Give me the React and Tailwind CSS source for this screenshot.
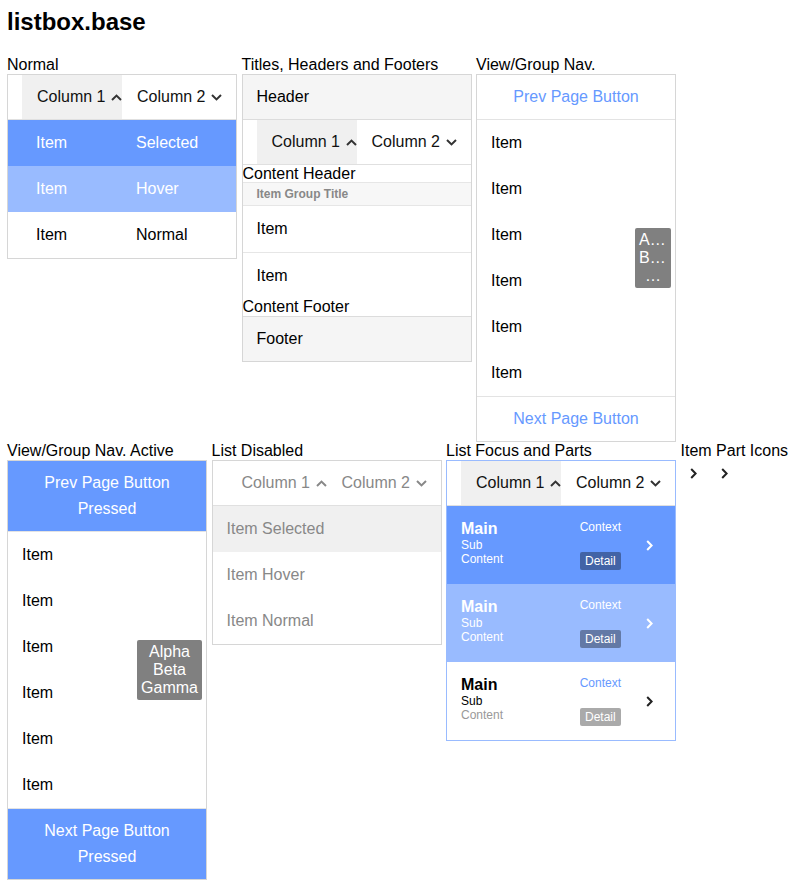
import React from "react";

const CaretUp = ({ className }) => (
  <svg width="11" height="7" viewBox="0 0 11 7" fill="none" className={className}>
    <path d="M1 6L5.5 1.6L10 6" stroke="currentColor" strokeWidth="2" />
  </svg>
);

const CaretDown = ({ className }) => (
  <svg width="11" height="7" viewBox="0 0 11 7" fill="none" className={className}>
    <path d="M1 1L5.5 5.4L10 1" stroke="currentColor" strokeWidth="2" />
  </svg>
);

const ChevronRight = ({ className }) => (
  <svg width="7" height="11" viewBox="0 0 7 11" fill="none" className={className}>
    <path d="M1.2 1L5.6 5.5L1.2 10" stroke="currentColor" strokeWidth="2" />
  </svg>
);

// column header row shared by several panels
const ColumnHeader = ({ sorted = true, disabled = false }) => {
  const text = disabled ? "text-[#888]" : "text-[#111]";
  const icon = disabled ? "text-[#888]" : "text-[#333]";
  return (
    <div className="h-[45px] flex pl-[14px] border-b border-[#e0e0e0]">
      <div
        className={`w-[100px] flex items-center justify-between pl-[15px] pr-0 ${
          sorted ? "bg-[#f0f0f0]" : ""
        }`}
      >
        <span className={text}>Column 1</span>
        <CaretUp className={icon} />
      </div>
      <div className="w-[100px] flex items-center justify-between pl-[15px] pr-0">
        <span className={text}>Column 2</span>
        <CaretDown className={icon} />
      </div>
    </div>
  );
};

const Label = ({ children }) => <div className="leading-[18px]">{children}</div>;

const normalRows = [
  { a: "Item", b: "Selected", cls: "bg-[#6699ff] text-white" },
  { a: "Item", b: "Hover", cls: "bg-[#99bbff] text-white" },
  { a: "Item", b: "Normal", cls: "bg-white text-black" },
];

const focusRows = [
  {
    bg: "bg-[#6699ff]",
    main: "text-white",
    sub: "text-white",
    content: "text-white",
    context: "text-white",
    badge: "bg-black/35",
    chev: "text-white",
  },
  {
    bg: "bg-[#99bbff]",
    main: "text-white",
    sub: "text-white",
    content: "text-white",
    context: "text-white",
    badge: "bg-black/35",
    chev: "text-white",
  },
  {
    bg: "bg-white",
    main: "text-black",
    sub: "text-black",
    content: "text-[#999]",
    context: "text-[#6699ff]",
    badge: "bg-[#aaa]",
    chev: "text-[#222]",
  },
];

const navItems = ["Item", "Item", "Item", "Item", "Item", "Item"];

const App = () => {
  return (
    <div className="min-h-[889px] bg-white pt-2 pl-[7px] text-base text-black font-['Liberation_Sans',Arial,sans-serif]">
      <h1 className="text-2xl font-bold leading-[28px] mb-[20px]">listbox.base</h1>

      {/* Row 1 */}
      <div className="flex items-start gap-x-[4.5px]">
        {/* Normal */}
        <div>
          <Label>Normal</Label>
          <div className="w-[230px] border border-[#d6d6d6]">
            <ColumnHeader />
            {normalRows.map((row, i) => (
              <div key={i} className={`h-[46px] flex items-center pl-[14px] ${row.cls}`}>
                <div className="w-[100px] pl-[14px]">{row.a}</div>
                <div className="w-[100px] pl-[14px]">{row.b}</div>
              </div>
            ))}
          </div>
        </div>

        {/* Titles, Headers and Footers */}
        <div>
          <Label>Titles, Headers and Footers</Label>
          <div className="w-[230px] border border-[#d6d6d6]">
            <div className="h-[45px] flex items-center px-[14px] bg-[#f5f5f5] border-b border-[#dcdcdc]">
              Header
            </div>
            <ColumnHeader />
            <div className="leading-[17px]">Content Header</div>
            <div className="px-[14px] py-1 text-xs font-bold leading-[14px] text-[#888] bg-[#f7f7f7] border-y border-[#e6e6e6]">
              Item Group Title
            </div>
            <div className="h-[46px] flex items-center px-[14px]">Item</div>
            <div className="h-[46px] flex items-center px-[14px] border-t border-[#e6e6e6]">Item</div>
            <div className="leading-[18px]">Content Footer</div>
            <div className="h-[45px] flex items-center px-[14px] bg-[#f5f5f5] border-t border-[#dcdcdc]">
              Footer
            </div>
          </div>
        </div>

        {/* View/Group Nav. */}
        <div>
          <Label>View/Group Nav.</Label>
          <div className="w-[200px] border border-[#d6d6d6]">
            <div className="h-[45px] flex items-center justify-center text-[#6699ff] border-b border-[#e3e3e3]">
              Prev Page Button
            </div>
            <div className="relative">
              {navItems.map((item, i) => (
                <div key={i} className="h-[46px] flex items-center px-[14px]">
                  {item}
                </div>
              ))}
              <div className="absolute right-[4px] top-1/2 -translate-y-1/2 w-[36px] px-1 py-[3px] rounded-[2px] bg-[#808080] text-white text-center leading-[18px]">
                <div className="text-left">A…</div>
                <div className="text-left">B…</div>
                <div>…</div>
              </div>
            </div>
            <div className="h-[45px] flex items-center justify-center text-[#6699ff] border-t border-[#e3e3e3]">
              Next Page Button
            </div>
          </div>
        </div>
      </div>

      {/* Row 2 */}
      <div className="flex items-start gap-x-[4.5px]">
        {/* View/Group Nav. Active */}
        <div>
          <Label>View/Group Nav. Active</Label>
          <div className="w-[200px] border border-[#d6d6d6]">
            <div className="py-[9px] leading-[26px] text-center text-white bg-[#6699ff] border-b border-[#e3e3e3]">
              <div>Prev Page Button</div>
              <div>Pressed</div>
            </div>
            <div className="relative">
              {navItems.map((item, i) => (
                <div key={i} className="h-[46px] flex items-center px-[14px]">
                  {item}
                </div>
              ))}
              <div className="absolute right-[4px] top-1/2 -translate-y-1/2 px-1 py-[3px] rounded-[2px] bg-[#808080] text-white text-center leading-[18px]">
                <div>Alpha</div>
                <div>Beta</div>
                <div>Gamma</div>
              </div>
            </div>
            <div className="py-[9px] leading-[26px] text-center text-white bg-[#6699ff] border-t border-[#e3e3e3]">
              <div>Next Page Button</div>
              <div>Pressed</div>
            </div>
          </div>
        </div>

        {/* List Disabled */}
        <div>
          <Label>List Disabled</Label>
          <div className="w-[230px] border border-[#d6d6d6] text-[#888]">
            <ColumnHeader sorted={false} disabled />
            <div className="h-[46px] flex items-center px-[14px] bg-[#f0f0f0]">Item Selected</div>
            <div className="h-[46px] flex items-center px-[14px]">Item Hover</div>
            <div className="h-[46px] flex items-center px-[14px]">Item Normal</div>
          </div>
        </div>

        {/* List Focus and Parts */}
        <div>
          <Label>List Focus and Parts</Label>
          <div className="w-[230px] border border-[#99bbff]">
            <ColumnHeader />
            {focusRows.map((row, i) => (
              <div key={i} className={`flex items-center py-[14px] pl-[14px] pr-[22px] ${row.bg}`}>
                <div className="flex-1 self-start">
                  <div className={`font-bold leading-[18px] ${row.main}`}>Main</div>
                  <div className={`text-xs leading-[14px] ${row.sub}`}>Sub</div>
                  <div className={`text-xs leading-[14px] ${row.content}`}>Content</div>
                </div>
                <div className="h-[50px] flex flex-col items-center justify-between">
                  <div className={`text-xs leading-[14px] ${row.context}`}>Context</div>
                  <div className={`px-[5px] py-[2px] rounded-[2px] text-xs leading-[14px] text-white ${row.badge}`}>
                    Detail
                  </div>
                </div>
                <ChevronRight className={`ml-[25px] ${row.chev}`} />
              </div>
            ))}
          </div>
        </div>

        {/* Item Part Icons */}
        <div>
          <Label>Item Part Icons</Label>
          <div className="h-[26px] flex items-center gap-[24px] pl-[9px] text-[#222]">
            <ChevronRight />
            <ChevronRight />
          </div>
        </div>
      </div>
    </div>
  );
};

export default App;
